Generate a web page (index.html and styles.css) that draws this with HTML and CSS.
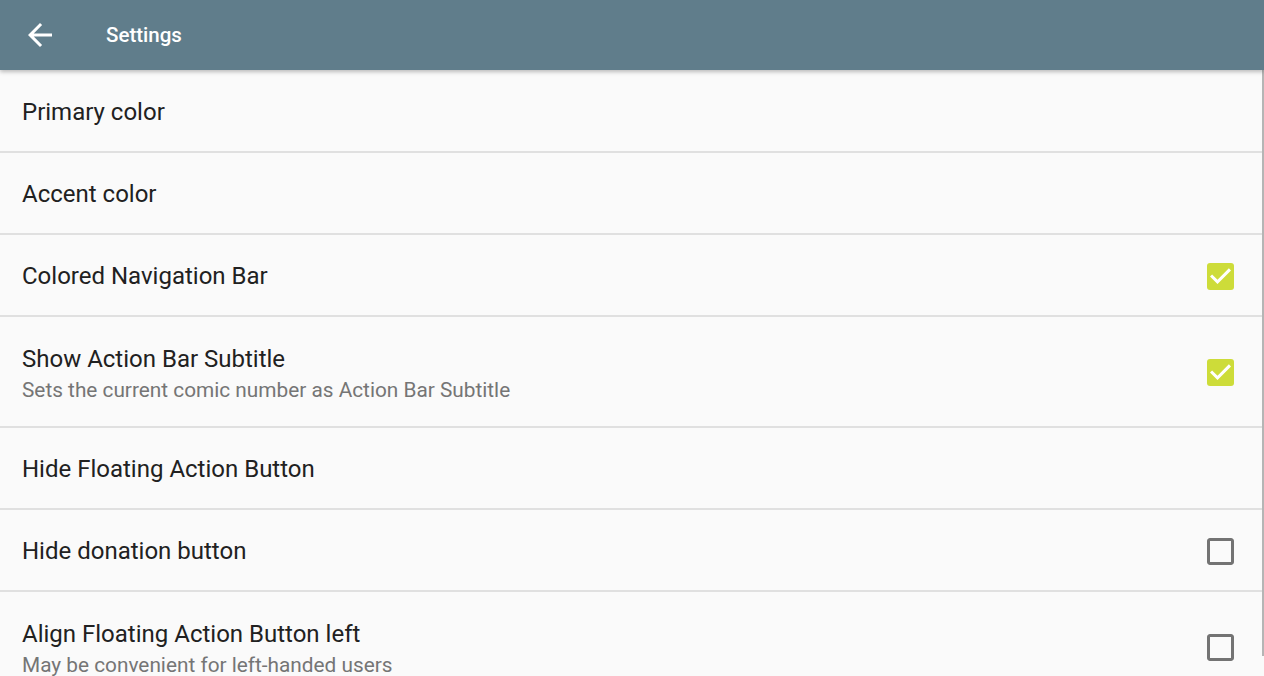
FILE: index.html
```
<!DOCTYPE html>
<html>
<head>
<meta charset="utf-8">
<link rel="stylesheet" href="styles.css">
</head>
<body>
<div class="app">
  <header class="toolbar">
    <svg class="back" viewBox="0 0 24 24" width="36" height="36"><path fill="#fff" d="M20 11H7.83l5.59-5.59L12 4l-8 8 8 8 1.41-1.41L7.83 13H20v-2z"/></svg>
    <div class="title">Settings</div>
  </header>
  <main class="list">
    <div class="row"><div class="text"><div class="t">Primary color</div></div></div>
    <div class="row"><div class="text"><div class="t">Accent color</div></div></div>
    <div class="row"><div class="text"><div class="t">Colored Navigation Bar</div></div><svg class="cb" viewBox="3 3 18 18" width="27" height="27"><rect x="3" y="3" width="18" height="18" rx="2" fill="#cddc39"/><path fill="#fff" d="M10 17l-5-5 1.41-1.41L10 14.17l7.59-7.59L19 8l-9 9z"/></svg></div>
    <div class="row two"><div class="text"><div class="t">Show Action Bar Subtitle</div><div class="s">Sets the current comic number as Action Bar Subtitle</div></div><svg class="cb" viewBox="3 3 18 18" width="27" height="27"><rect x="3" y="3" width="18" height="18" rx="2" fill="#cddc39"/><path fill="#fff" d="M10 17l-5-5 1.41-1.41L10 14.17l7.59-7.59L19 8l-9 9z"/></svg></div>
    <div class="row"><div class="text"><div class="t">Hide Floating Action Button</div></div></div>
    <div class="row"><div class="text"><div class="t">Hide donation button</div></div><svg class="cb" viewBox="3 3 18 18" width="27" height="27"><path fill="#737373" d="M19 5v14H5V5h14m0-2H5c-1.1 0-2 .9-2 2v14c0 1.1.9 2 2 2h14c1.1 0 2-.9 2-2V5c0-1.1-.9-2-2-2z"/></svg></div>
    <div class="row two"><div class="text"><div class="t">Align Floating Action Button left</div><div class="s">May be convenient for left-handed users</div></div><svg class="cb" viewBox="3 3 18 18" width="27" height="27"><path fill="#737373" d="M19 5v14H5V5h14m0-2H5c-1.1 0-2 .9-2 2v14c0 1.1.9 2 2 2h14c1.1 0 2-.9 2-2V5c0-1.1-.9-2-2-2z"/></svg></div>
  </main>
  <div class="scrollbar"></div>
</div>
</body>
</html>
```
FILE: styles.css
```
html, body { margin: 0; padding: 0; }
body {
  background: #fafafa;
  font-family: Roboto, "Liberation Sans", sans-serif;
  width: 1264px;
  height: 676px;
  overflow: hidden;
}
.app { position: relative; width: 1264px; height: 676px; }
.toolbar {
  height: 70px;
  background: #607d8b;
  display: flex;
  align-items: center;
  box-shadow: 0 2px 4px rgba(0,0,0,0.25);
  position: relative;
  z-index: 2;
}
.back { margin-left: 22px; flex: none; }
.title {
  margin-left: 48px;
  color: #fff;
  font-size: 20.5px;
  font-weight: 500;
}
.list { display: flex; flex-direction: column; padding-top: 1px; }
.row {
  box-sizing: border-box;
  height: 82px;
  border-bottom: 2px solid #e0e0e0;
  display: flex;
  align-items: center;
  padding: 2px 30px 0 22px;
}
.row.two { height: 111px; padding-top: 5px; }
.row.two .cb { margin-top: -4px; }
.text { flex: 1; }
.t { font-size: 24px; color: #212121; line-height: 30px; }
.s { font-size: 20.8px; color: #757575; line-height: 28px; margin-top: 2px; }
.cb { flex: none; display: block; }
.scrollbar {
  position: absolute;
  right: 0;
  top: 70px;
  width: 2px;
  height: 586px;
  background: #b5b5b5;
}
```
